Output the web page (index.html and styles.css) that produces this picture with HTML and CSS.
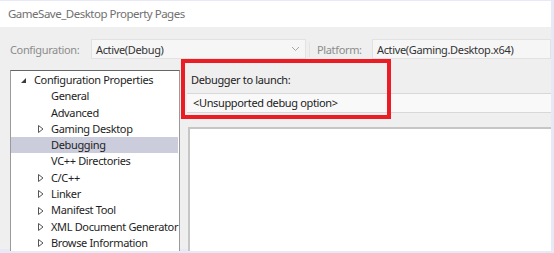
FILE: index.html
```html
<!DOCTYPE html>
<html>
<head lang="en">
    <meta charset="UTF-8">
    <title>GameSave_Desktop Property Pages</title>
    <link rel="stylesheet" href="styles.css">
</head>
<body>
<div class="window">
    <div class="titlebar">GameSave_Desktop Property Pages</div>
    <div class="config-row">
        <span class="label">Configuration:</span>
        <div class="combo combo-config">
            <span>Active(Debug)</span>
            <svg class="chevron" width="9" height="6" viewBox="0 0 9 6"><path d="M1 1 L4.5 4.5 L8 1" fill="none" stroke="#a8a8a8" stroke-width="1"/></svg>
        </div>
        <span class="label label-platform">Platform:</span>
        <div class="combo combo-platform">
            <span>Active(Gaming.Desktop.x64)</span>
        </div>
    </div>
    <div class="main">
        <div class="tree">
            <div class="node root">
                <svg class="tri" width="7" height="7" viewBox="0 0 7 7"><path d="M6 1 L6 6 L1 6 Z" fill="#3c3c3c"/></svg>
                <span>Configuration Properties</span>
            </div>
            <div class="node leaf">General</div>
            <div class="node leaf">Advanced</div>
            <div class="node">
                <svg class="tri" width="6" height="8" viewBox="0 0 6 8"><path d="M0.5 0.5 L5 4 L0.5 7.5 Z" fill="none" stroke="#555" stroke-width="1"/></svg>
                <span>Gaming Desktop</span>
            </div>
            <div class="node leaf selected">Debugging</div>
            <div class="node leaf">VC++ Directories</div>
            <div class="node">
                <svg class="tri" width="6" height="8" viewBox="0 0 6 8"><path d="M0.5 0.5 L5 4 L0.5 7.5 Z" fill="none" stroke="#555" stroke-width="1"/></svg>
                <span>C/C++</span>
            </div>
            <div class="node">
                <svg class="tri" width="6" height="8" viewBox="0 0 6 8"><path d="M0.5 0.5 L5 4 L0.5 7.5 Z" fill="none" stroke="#555" stroke-width="1"/></svg>
                <span>Linker</span>
            </div>
            <div class="node">
                <svg class="tri" width="6" height="8" viewBox="0 0 6 8"><path d="M0.5 0.5 L5 4 L0.5 7.5 Z" fill="none" stroke="#555" stroke-width="1"/></svg>
                <span>Manifest Tool</span>
            </div>
            <div class="node">
                <svg class="tri" width="6" height="8" viewBox="0 0 6 8"><path d="M0.5 0.5 L5 4 L0.5 7.5 Z" fill="none" stroke="#555" stroke-width="1"/></svg>
                <span>XML Document Generator</span>
            </div>
            <div class="node">
                <svg class="tri" width="6" height="8" viewBox="0 0 6 8"><path d="M0.5 0.5 L5 4 L0.5 7.5 Z" fill="none" stroke="#555" stroke-width="1"/></svg>
                <span>Browse Information</span>
            </div>
        </div>
        <div class="pane">
            <div class="prop-header">Debugger to launch:</div>
            <div class="prop-field">&lt;Unsupported debug option&gt;</div>
            <div class="prop-grid"></div>
            <div class="highlight"></div>
        </div>
    </div>
</div>
</body>
</html>
```

FILE: styles.css
```css
*{
    margin: 0;
    padding: 0;
    box-sizing: border-box;
}
body{
    background-color: #e7e9f6;
    font-family: "Noto Sans", "Open Sans", sans-serif;
    letter-spacing: -0.35px;
    width: 554px;
    height: 253px;
    overflow: hidden;
}
.window{
    width: 551px;
    height: 249px;
    background-color: #efefef;
    border-top: 1px solid #e7e9f6;
    display: flex;
    flex-direction: column;
}
.titlebar{
    height: 26px;
    background-color: #ffffff;
    color: #707070;
    font-size: 11.5px;
    letter-spacing: -0.5px;
    line-height: 26px;
    padding-left: 8px;
}
.config-row{
    display: flex;
    align-items: center;
    height: 20px;
    margin-top: 12px;
    font-size: 11px;
}
.label{
    color: #8c8c8c;
    padding-left: 10px;
    width: 91px;
}
.combo{
    height: 20px;
    background-color: #f6f6f6;
    border: 1px solid #e2e2e2;
    color: #333;
    display: flex;
    align-items: center;
    padding-left: 4px;
}
.combo-config{
    width: 215px;
    justify-content: space-between;
    padding-right: 5px;
}
.label-platform{
    width: 63px;
    padding-left: 7px;
    border-left: 1px solid #e4e4e4;
    margin-left: 3px;
}
.combo-platform{
    flex: 1;
}
.main{
    flex: 1;
    display: flex;
    margin-top: 11px;
    position: relative;
}
.tree{
    width: 170px;
    flex-shrink: 0;
    margin-left: 10px;
    background-color: #ffffff;
    border: 1px solid #9a9a9a;
    border-top-color: #666;
    border-bottom: none;
    padding-top: 1px;
    font-size: 11px;
    color: #1e1e1e;
    overflow: hidden;
}
.node{
    height: 16.3px;
    line-height: 16.3px;
    display: flex;
    align-items: center;
    padding-left: 27px;
    white-space: nowrap;
}
.node .tri{
    flex-shrink: 0;
    margin-right: 7px;
}
.node.root{
    padding-left: 9px;
}
.node.leaf{
    padding-left: 40px;
}
.selected{
    background-color: #cbccdc;
    margin-right: 1px;
}
.pane{
    flex: 1;
    display: flex;
    flex-direction: column;
    margin-left: 1px;
    position: relative;
}
.prop-header{
    height: 23px;
    font-size: 11px;
    color: #222;
    padding-left: 10px;
    line-height: 19px;
}
.prop-field{
    height: 20px;
    margin-left: 6px;
    background-color: #f9f9f9;
    border-top: 1px solid #d8d8d8;
    border-bottom: 1px solid #d8d8d8;
    font-size: 11px;
    color: #222;
    padding-left: 6px;
    line-height: 18px;
}
.prop-grid{
    flex: 1;
    margin-top: 14px;
    margin-left: 7px;
    background-color: #ffffff;
    border-top: 2px solid #c6c6c6;
    border-left: 2px solid #c6c6c6;
}
.highlight{
    position: absolute;
    left: 0;
    top: -11px;
    width: 210px;
    height: 60px;
    border: 4px solid #ec1c24;
}
```
